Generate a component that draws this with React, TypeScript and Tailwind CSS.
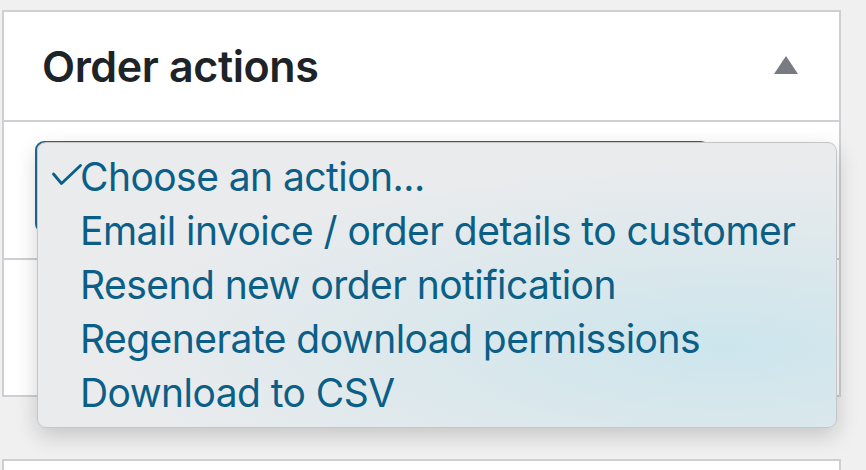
import React from 'react';

const actions = [
  'Choose an action...',
  'Email invoice / order details to customer',
  'Resend new order notification',
  'Regenerate download permissions',
  'Download to CSV',
];

const App: React.FC = () => {
  return (
    <div className="relative min-h-[470px] w-[866px] overflow-hidden bg-[#f0f0f1] pt-[10px] font-['Inter','Noto_Sans',sans-serif]">
      <div className="ml-[2px] w-[839px] border-2 border-[#cdcfd2] bg-white">
        <div className="flex h-[110px] items-center justify-between border-b-2 border-[#cdcfd2] pl-[38px] pr-[41px]">
          <h2 className="text-[43px] font-semibold tracking-[-0.4px] text-[#1d2327]">Order actions</h2>
          <svg width="24" height="18" viewBox="0 0 24 18" className="mt-[-2px]">
            <polygon points="12,0 24,18 0,18" fill="#787c82" />
          </svg>
        </div>
        <div className="h-[138px] border-b-2 border-[#cdcfd2] pl-[31px] pt-[19px]">
          <div className="h-[92px] w-[675px] rounded-[9px] border-2 border-[#1f6a96] bg-white" />
        </div>
        <div className="h-[135px] bg-white" />
      </div>
      <div className="ml-[2px] mt-[62px] h-[40px] w-[839px] border-2 border-[#cdcfd2] bg-white" />

      <ul className="absolute left-[37px] top-[142px] h-[286px] w-[800px] rounded-[9px] border border-[#c4c5c7] bg-[radial-gradient(ellipse_at_86%_72%,#cce5ed_0%,#dbe8ec_30%,#e9ebed_62%)] pt-[7px] text-[39px] leading-[54px] tracking-[-0.55px] text-[#0b5f87] shadow-[0_8px_22px_rgba(0,0,0,0.18)]">
        {actions.map((a, i) => (
          <li key={a} className="relative pl-[42px] whitespace-nowrap">
            {i === 0 && (
              <svg width="30" height="22" viewBox="0 0 30 22" className="absolute left-[14px] top-[14px]">
                <path d="M1.5 10 L9.5 19.5 L28.5 1.5" fill="none" stroke="#0b5f87" strokeWidth="2.8" strokeLinecap="round" strokeLinejoin="round" />
              </svg>
            )}
            {a}
          </li>
        ))}
      </ul>
    </div>
  );
};

export default App;
